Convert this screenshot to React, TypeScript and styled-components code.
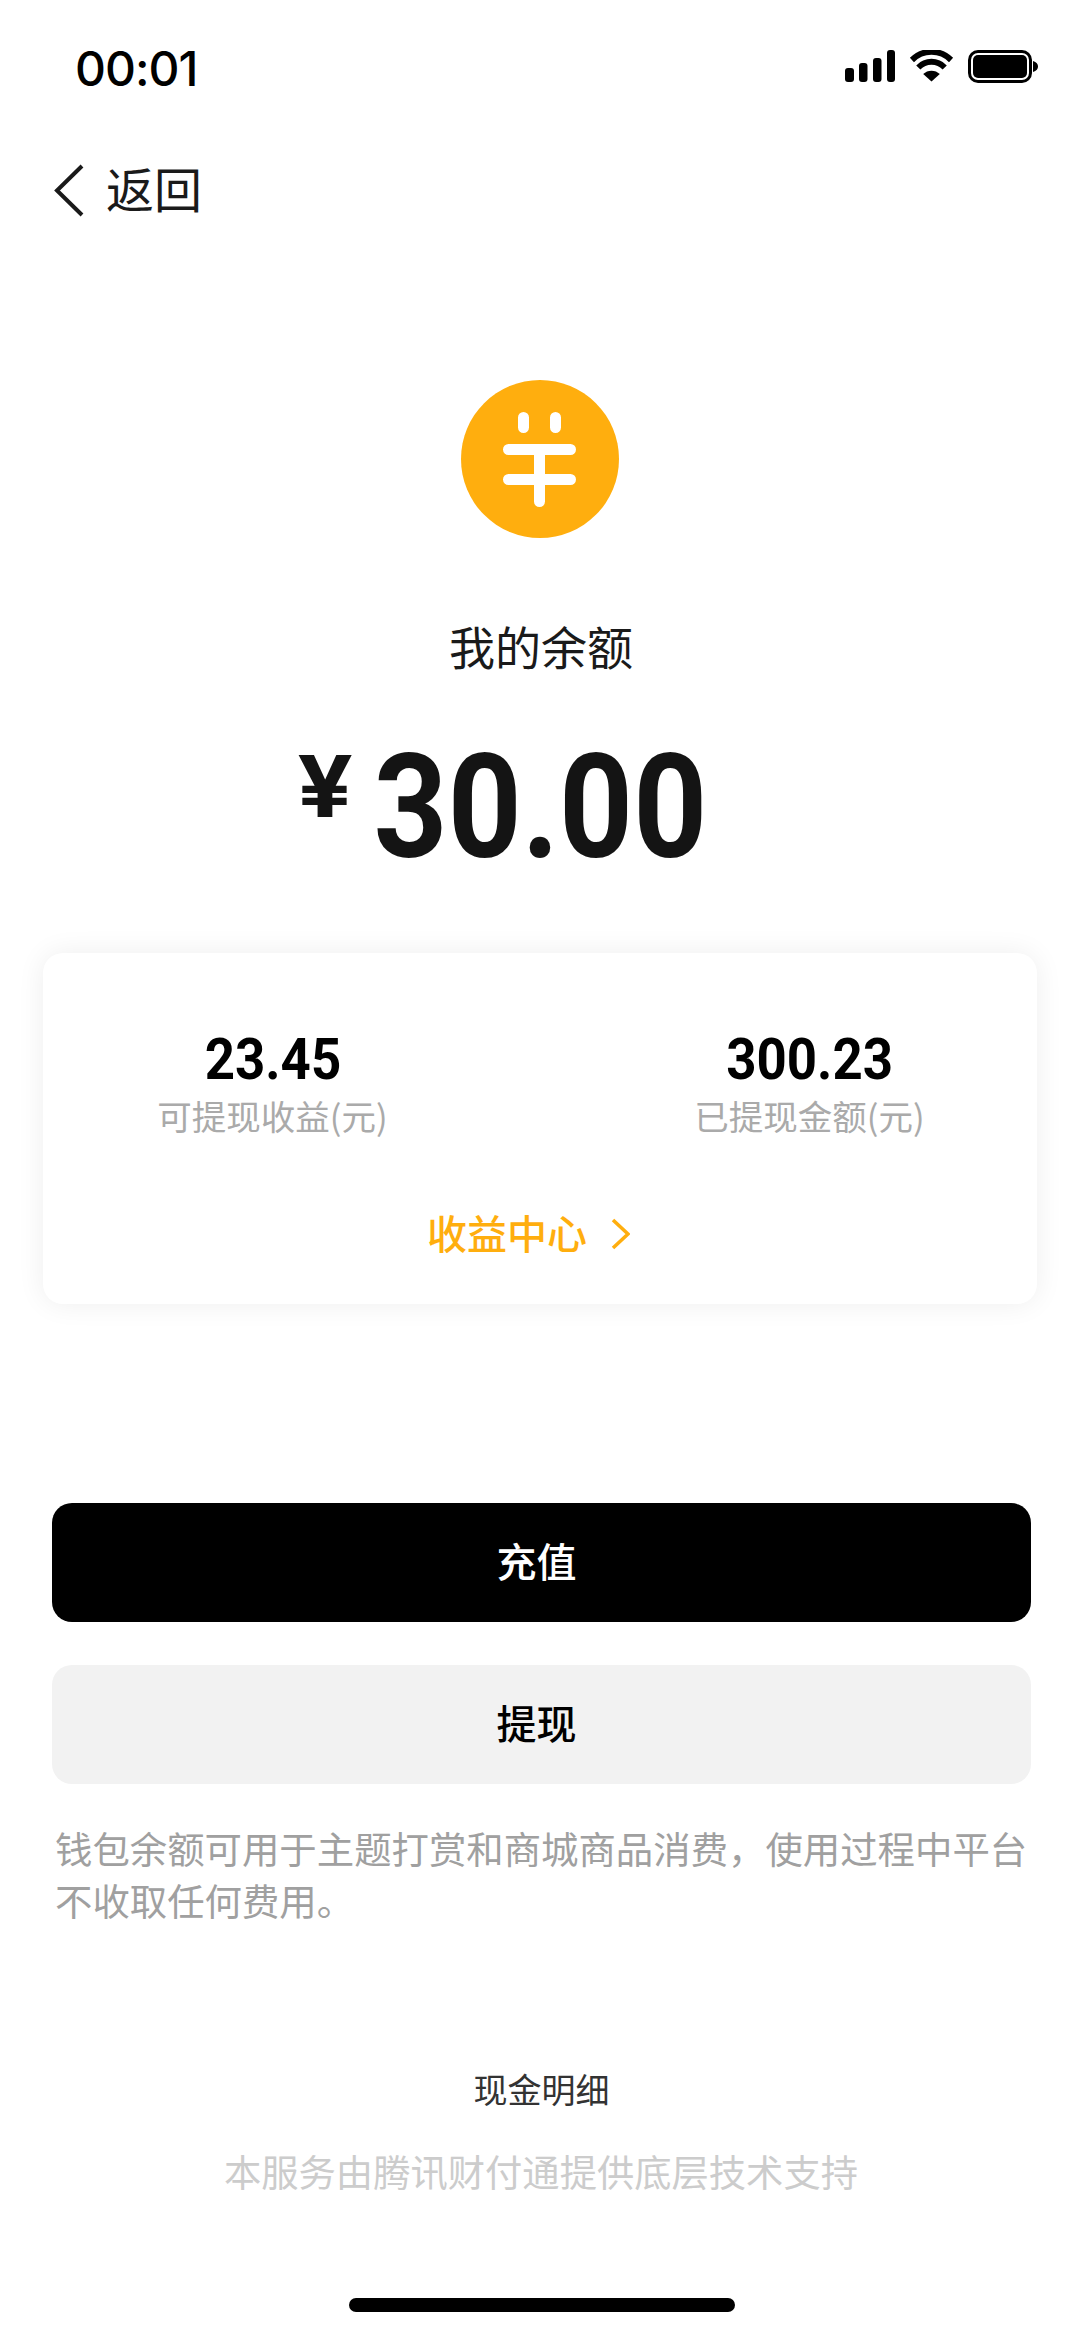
import styled, { createGlobalStyle } from "styled-components";

const GlobalStyle = createGlobalStyle`
  html, body {
    margin: 0;
    padding: 0;
    background: #fff;
  }
  * {
    box-sizing: border-box;
  }
`;

const Page = styled.div`
  width: 1080px;
  height: 2339px;
  overflow: hidden;
  background: #fff;
  display: flex;
  flex-direction: column;
  font-family: "Noto Sans CJK SC", "Noto Sans", sans-serif;
`;

const StatusBar = styled.div`
  height: 136px;
  display: flex;
  align-items: center;
  justify-content: space-between;
  padding: 0 42px 0 75px;
`;

const Time = styled.span`
  font-family: Inter, sans-serif;
  font-size: 48px;
  font-weight: 500;
  color: #000;
  letter-spacing: -1px;
`;

const StatusIcons = styled.div`
  display: flex;
  align-items: center;
  gap: 14px;
  margin-bottom: 4px;
`;

const NavBar = styled.div`
  height: 108px;
  display: flex;
  align-items: center;
  gap: 22px;
  padding-left: 54px;
`;

const NavTitle = styled.span`
  font-size: 48px;
  color: #1a1a1a;
  margin-bottom: 6px;
`;

const Coin = styled.div`
  width: 158px;
  height: 158px;
  margin: 136px auto 0;
  border-radius: 50%;
  background: #ffae0e;
  display: flex;
  align-items: center;
  justify-content: center;
`;

const BalanceLabel = styled.div`
  margin-top: 77px;
  padding-left: 2px;
  text-align: center;
  font-size: 46px;
  line-height: 60px;
  color: #1a1a1a;
`;

const AmountRow = styled.div`
  margin-top: 59px;
  display: grid;
  grid-template-columns: 1fr auto 1fr;
  align-items: start;
  color: #141414;
`;

const Currency = styled.span`
  justify-self: end;
  margin-top: 8px;
  font-family: Roboto, sans-serif;
  font-size: 88px;
  line-height: 90px;
  font-weight: 700;
  transform: scaleX(1.15);
  transform-origin: right center;
`;

const Amount = styled.span`
  font-family: Roboto, sans-serif;
  font-size: 145px;
  line-height: 146px;
  font-weight: 700;
  transform: scaleX(0.89);
`;

const Card = styled.div`
  margin: 73px 43px 0;
  height: 351px;
  border-radius: 20px;
  background: #fff;
  box-shadow: 0 0 28px rgba(0, 0, 0, 0.07);
  display: flex;
  flex-direction: column;
  align-items: center;
  padding-top: 76px;
`;

const Stats = styled.div`
  display: grid;
  grid-template-columns: 460px 460px;
  column-gap: 77px;
  padding-left: 2px;
`;

const Stat = styled.div`
  display: flex;
  flex-direction: column;
  align-items: center;
`;

const StatValue = styled.span`
  font-family: Roboto, sans-serif;
  font-size: 58px;
  line-height: 60px;
  font-weight: 700;
  color: #000;
  transform: scaleX(0.91);
`;

const StatLabel = styled.span`
  font-size: 34.5px;
  line-height: 52px;
  color: #aaa;
`;

const CenterLink = styled.div`
  margin-top: 61px;
  padding-right: 23px;
  display: flex;
  align-items: center;
  gap: 24px;
  font-size: 40px;
  line-height: 60px;
  font-weight: 500;
  color: #ffae0e;

  svg {
    margin-top: 3px;
  }
`;

const Button = styled.div<{ $dark?: boolean }>`
  margin: ${(p) => (p.$dark ? "199px" : "43px")} 49px 0 52px;
  height: 119px;
  padding: 0 10px 6px 0;
  border-radius: 20px;
  display: flex;
  align-items: center;
  justify-content: center;
  font-size: 40px;
  font-weight: 500;
  background: ${(p) => (p.$dark ? "#000" : "#f2f2f2")};
  color: ${(p) => (p.$dark ? "#fff" : "#000")};
`;

const Notice = styled.p`
  margin: 38px 50px 0 55px;
  font-size: 37.4px;
  line-height: 52px;
  color: #a0a0a0;
`;

const Details = styled.div`
  margin-top: 138px;
  text-align: center;
  font-size: 34px;
  line-height: 50px;
  padding-left: 3px;
  color: #333;
`;

const Footer = styled.div`
  margin-top: 29px;
  text-align: center;
  font-size: 37.3px;
  line-height: 56px;
  padding-left: 2px;
  color: #ccc;
`;

const HomeBar = styled.div`
  width: 386px;
  height: 14px;
  margin: 99px 0 0 349px;
  border-radius: 7px;
  background: #000;
`;

const SignalIcon = () => (
  <svg width="50" height="32" viewBox="0 0 50 32">
    <rect x="0" y="18" width="9" height="14" rx="3" />
    <rect x="14" y="13" width="8.500" height="19" rx="3" />
    <rect x="28" y="8" width="8.500" height="24" rx="3" />
    <rect x="42" y="0" width="8" height="32" rx="3" />
  </svg>
);

const WifiIcon = () => (
  <svg width="45" height="32" viewBox="0 0 46 32" preserveAspectRatio="none">
    <path d="M23 31.500 L14.500 24 A12.500 12.500 0 0 1 31.500 24 Z" />
    <path d="M9.500 17.500 A19 19 0 0 1 36.500 17.500" fill="none" stroke="#000" strokeWidth="6" />
    <path d="M3 10 A28.500 28.500 0 0 1 43 10" fill="none" stroke="#000" strokeWidth="6" />
  </svg>
);

const BatteryIcon = () => (
  <svg width="70" height="33" viewBox="0 0 70 33">
    <rect x="1.500" y="1.500" width="61" height="30" rx="8.500" fill="none" stroke="#000" strokeWidth="3" />
    <rect x="5" y="5" width="54" height="23" rx="5" />
    <path d="M65 11 C68.500 12 70 14 70 16.500 C70 19 68.500 21 65 22 Z" />
  </svg>
);

const BackIcon = () => (
  <svg width="30" height="53" viewBox="0 0 30 53">
    <path d="M28 2 L3 26.500 L28 51" fill="none" stroke="#1a1a1a" strokeWidth="4" />
  </svg>
);

const CoinGlyph = () => (
  <svg width="158" height="158" viewBox="0 0 158 158" fill="none" stroke="#fff" strokeLinecap="round" strokeWidth="11">
    <path d="M62.500 37.500 V47.500 M94.500 37.500 V47.500" />
    <path d="M47.500 69.500 H109.500 M47.500 99.500 H109.500" />
    <path d="M78.500 69.500 V121.500" />
  </svg>
);

const LinkArrow = () => (
  <svg width="19" height="32" viewBox="0 0 19 32">
    <path d="M2 2 L17 16 L2 30" fill="none" stroke="#ffae0e" strokeWidth="3.600" />
  </svg>
);

export default function App() {
  return (
    <Page>
      <GlobalStyle />
      <StatusBar>
        <Time>00:01</Time>
        <StatusIcons>
          <SignalIcon />
          <WifiIcon />
          <BatteryIcon />
        </StatusIcons>
      </StatusBar>
      <NavBar>
        <BackIcon />
        <NavTitle>返回</NavTitle>
      </NavBar>
      <Coin>
        <CoinGlyph />
      </Coin>
      <BalanceLabel>我的余额</BalanceLabel>
      <AmountRow>
        <Currency>¥</Currency>
        <Amount>30.00</Amount>
      </AmountRow>
      <Card>
        <Stats>
          <Stat>
            <StatValue>23.45</StatValue>
            <StatLabel>可提现收益(元)</StatLabel>
          </Stat>
          <Stat>
            <StatValue>300.23</StatValue>
            <StatLabel>已提现金额(元)</StatLabel>
          </Stat>
        </Stats>
        <CenterLink>
          收益中心
          <LinkArrow />
        </CenterLink>
      </Card>
      <Button $dark>充值</Button>
      <Button>提现</Button>
      <Notice>钱包余额可用于主题打赏和商城商品消费，使用过程中平台不收取任何费用。</Notice>
      <Details>现金明细</Details>
      <Footer>本服务由腾讯财付通提供底层技术支持</Footer>
      <HomeBar />
    </Page>
  );
}
